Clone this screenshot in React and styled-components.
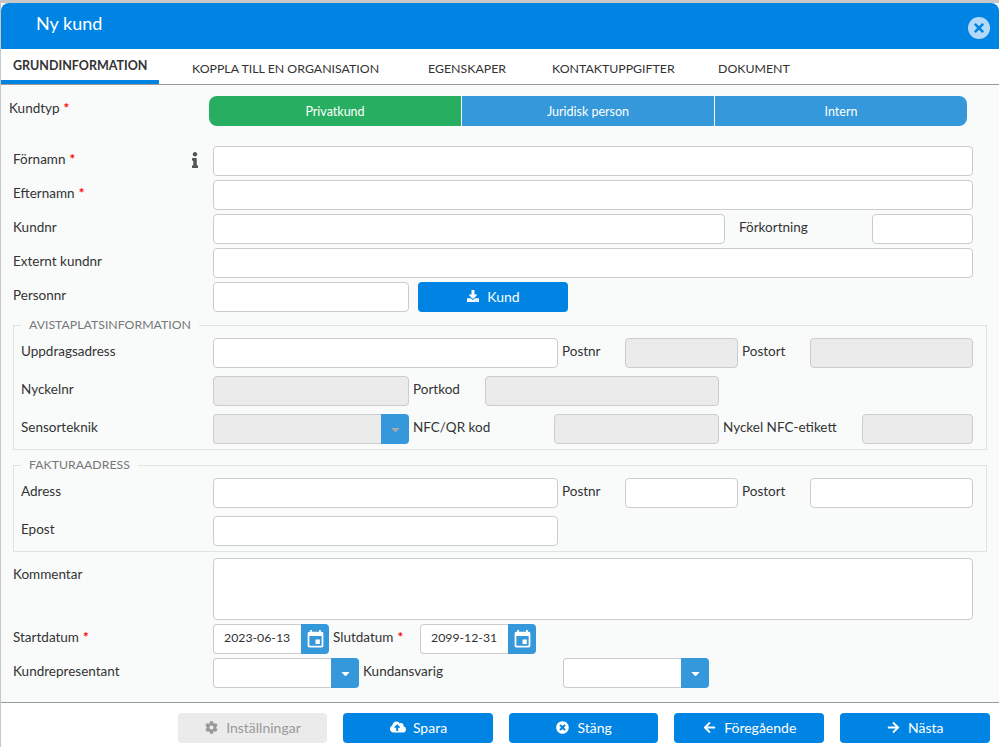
import React from "react";
import styled, { createGlobalStyle } from "styled-components";
import {
  FaArrowLeft,
  FaArrowRight,
  FaCaretDown,
  FaCloudUploadAlt,
  FaCog,
  FaDownload,
  FaInfo,
  FaTimes,
  FaTimesCircle,
} from "react-icons/fa";
import { MdEvent } from "react-icons/md";

const GlobalStyle = createGlobalStyle`
  html, body {
    margin: 0;
    padding: 0;
    background: #c8c8c8;
    font-family: "Lato", "Noto Sans", sans-serif;
    font-size: 13.5px;
    color: #333;
    overflow: hidden;
  }
  * { box-sizing: border-box; }
`;

const Dialog = styled.div`
  display: flex;
  flex-direction: column;
  width: 998px;
  height: 744px;
  margin: 3px 0 0 1px;
  background: #fff;
`;

const Header = styled.div`
  display: flex;
  justify-content: space-between;
  height: 46px;
  padding: 8px 9px 0 35px;
  background: #0084e3;
  border-radius: 8px 8px 0 0;
  color: #fff;
  font-size: 18px;
  line-height: 24px;
`;

const CloseButton = styled.span`
  display: flex;
  align-items: center;
  justify-content: center;
  width: 22px;
  height: 22px;
  margin-top: 6px;
  border-radius: 50%;
  background: #b3dbf8;
  color: #0084e3;
  font-size: 14px;
`;

const Tabs = styled.div`
  display: flex;
  height: 36px;
  border-bottom: 1px solid #999;
`;

const Tab = styled.div`
  width: ${(p) => p.$width}px;
  height: 35px;
  padding: ${(p) => (p.$active ? "8px 0 0 12px" : "11px 0 0 0")};
  border-bottom: ${(p) => (p.$active ? "4px solid #0084e3" : "none")};
  font-size: ${(p) => (p.$active ? 12.5 : 12.35)}px;
  line-height: 17px;
  font-weight: ${(p) => (p.$active ? 700 : 400)};
  white-space: nowrap;
`;

const Main = styled.div`
  flex: 1;
  padding-top: 11px;
  background: #f9fbfb;
  border-bottom: 1px solid #999;
`;

const TypeRow = styled.div`
  display: flex;
  align-items: flex-start;
  margin-bottom: 20px;
`;

const TypeLabel = styled.div`
  width: 208px;
  padding: 3px 0 0 8px;
  line-height: 18px;
`;

const Segments = styled.div`
  display: flex;
  gap: 1px;
  width: 758px;
  height: 30px;
  border-radius: 8px;
  overflow: hidden;
`;

const Segment = styled.div`
  flex: 1;
  background: ${(p) => (p.$active ? "#27ae60" : "#3498db")};
  color: #fff;
  font-size: 12.5px;
  line-height: 31px;
  text-align: center;
`;

const Row = styled.div`
  display: flex;
  align-items: flex-start;
  margin-top: ${(p) => p.$top ?? 0}px;
  margin-bottom: ${(p) => p.$gap ?? 4}px;
`;

const Label = styled.div`
  display: flex;
  justify-content: space-between;
  flex: none;
  width: ${(p) => p.$width}px;
  padding: ${(p) => p.$top ?? 4}px ${(p) => p.$right ?? 0}px 0 ${(p) => p.$left ?? 0}px;
  line-height: 18px;
  white-space: nowrap;
`;

const Required = styled.span`
  margin-left: 4px;
  color: #f00;
  font-weight: 700;
`;

const InfoIcon = styled(FaInfo)`
  margin-top: 2px;
  color: #555;
  font-size: 16px;
`;

const Input = styled.div`
  flex: none;
  width: ${(p) => p.$width}px;
  height: ${(p) => p.$height ?? 30}px;
  padding: 0 0 0 10px;
  background: ${(p) => (p.$disabled ? "#ebebeb" : "#fff")};
  border: 1px solid #ccc;
  border-radius: 4px;
  font-size: 12.3px;
  line-height: 26px;
  white-space: nowrap;
`;

const Combo = styled.div`
  display: flex;
  flex: none;
  width: ${(p) => p.$width}px;
  height: 30px;
`;

const ComboInput = styled(Input)`
  flex: 1;
  width: auto;
  border-right: none;
  border-radius: 4px 0 0 4px;
`;

const ComboButton = styled.span`
  display: flex;
  align-items: center;
  justify-content: center;
  width: 28px;
  background: #3498db;
  border-radius: 0 4px 4px 0;
  color: ${(p) => (p.$disabled ? "#aaa" : "#fff")};
  font-size: ${(p) => p.$size ?? 13}px;
`;

const Section = styled.fieldset`
  margin: ${(p) => p.$top}px 12px 0;
  padding: 4px 7px 5px;
  border: 1px solid #dfe3e3;
`;

const Legend = styled.legend`
  margin-left: 0;
  padding: 0 8px;
  color: #777;
  font-size: 12.3px;
  line-height: 18px;
`;

const SectionRow = styled(Row)`
  margin-bottom: ${(p) => (p.$last ? 0 : 8)}px;
`;

const Button = styled.div`
  display: flex;
  align-items: center;
  justify-content: center;
  gap: ${(p) => p.$gap ?? 8}px;
  flex: none;
  width: ${(p) => p.$width ?? 149.6}px;
  height: 30px;
  margin-left: ${(p) => p.$left ?? 0}px;
  padding: 0 0 2px 1px;
  background: ${(p) => (p.$disabled ? "#ebebeb" : "#0084e3")};
  border-radius: 4px;
  color: ${(p) => (p.$disabled ? "#999" : "#fff")};
  font-size: 14px;
`;

const Footer = styled.div`
  display: flex;
  justify-content: flex-end;
  gap: 16px;
  height: 44px;
  padding: 10px 9.4px 0 0;
`;

const RowBlock = styled.div`
  padding-left: 12px;
`;

const Req = () => <Required>*</Required>;

export default function App() {
  return (
    <>
      <GlobalStyle />
      <Dialog>
        <Header>
          Ny kund
          <CloseButton>
            <FaTimes />
          </CloseButton>
        </Header>
        <Tabs>
          <Tab $active $width={158}>GRUNDINFORMATION</Tab>
          <Tab $width={33} />
          <Tab $width={236}>KOPPLA TILL EN ORGANISATION</Tab>
          <Tab $width={124}>EGENSKAPER</Tab>
          <Tab $width={166}>KONTAKTUPPGIFTER</Tab>
          <Tab $width={100}>DOKUMENT</Tab>
        </Tabs>
        <Main>
          <TypeRow>
            <TypeLabel>Kundtyp<Req /></TypeLabel>
            <Segments>
              <Segment $active>Privatkund</Segment>
              <Segment>Juridisk person</Segment>
              <Segment>Intern</Segment>
            </Segments>
          </TypeRow>

          <RowBlock>
            <Row>
              <Label $width={200} $right={10}>
                <span>Förnamn<Req /></span>
                <InfoIcon />
              </Label>
              <Input $width={760} />
            </Row>
            <Row>
              <Label $width={200}><span>Efternamn<Req /></span></Label>
              <Input $width={760} />
            </Row>
            <Row>
              <Label $width={200}>Kundnr</Label>
              <Input $width={512} />
              <Label $width={147} $left={14}>Förkortning</Label>
              <Input $width={101} />
            </Row>
            <Row>
              <Label $width={200}>Externt kundnr</Label>
              <Input $width={760} />
            </Row>
            <Row $gap={0}>
              <Label $width={200}>Personnr</Label>
              <Input $width={196} />
              <Button $left={9} $width={150}>
                <FaDownload size={12} />
                Kund
              </Button>
            </Row>
          </RowBlock>

          <Section $top={4}>
            <Legend>AVISTAPLATSINFORMATION</Legend>
            <SectionRow>
              <Label $width={192}>Uppdragsadress</Label>
              <Input $width={345} />
              <Label $width={67} $left={4}>Postnr</Label>
              <Input $width={113} $disabled />
              <Label $width={72} $left={4}>Postort</Label>
              <Input $width={163} $disabled />
            </SectionRow>
            <SectionRow>
              <Label $width={192}>Nyckelnr</Label>
              <Input $width={196} $disabled />
              <Label $width={76} $left={4}>Portkod</Label>
              <Input $width={234} $disabled />
            </SectionRow>
            <SectionRow $last>
              <Label $width={192}>Sensorteknik</Label>
              <Combo $width={196}>
                <ComboInput $disabled />
                <ComboButton $disabled><FaCaretDown /></ComboButton>
              </Combo>
              <Label $width={145} $left={4}>NFC/QR kod</Label>
              <Input $width={165} $disabled />
              <Label $width={143} $left={4}>Nyckel NFC-etikett</Label>
              <Input $width={111} $disabled />
            </SectionRow>
          </Section>

          <Section $top={6}>
            <Legend>FAKTURAADRESS</Legend>
            <SectionRow>
              <Label $width={192}>Adress</Label>
              <Input $width={345} />
              <Label $width={67} $left={4}>Postnr</Label>
              <Input $width={113} />
              <Label $width={72} $left={4}>Postort</Label>
              <Input $width={163} />
            </SectionRow>
            <SectionRow $last>
              <Label $width={192}>Epost</Label>
              <Input $width={345} />
            </SectionRow>
          </Section>

          <RowBlock>
            <Row $top={6}>
              <Label $width={200} $top={7}>Kommentar</Label>
              <Input $width={760} $height={62} />
            </Row>
            <Row>
              <Label $width={200}><span>Startdatum<Req /></span></Label>
              <Combo $width={116}>
                <ComboInput>2023-06-13</ComboInput>
                <ComboButton $size={21}><MdEvent /></ComboButton>
              </Combo>
              <Label $width={91} $left={4}><span>Slutdatum<Req /></span></Label>
              <Combo $width={116}>
                <ComboInput>2099-12-31</ComboInput>
                <ComboButton $size={21}><MdEvent /></ComboButton>
              </Combo>
            </Row>
            <Row $gap={0}>
              <Label $width={200}>Kundrepresentant</Label>
              <Combo $width={146}>
                <ComboInput />
                <ComboButton><FaCaretDown /></ComboButton>
              </Combo>
              <Label $width={204} $left={4}>Kundansvarig</Label>
              <Combo $width={146}>
                <ComboInput />
                <ComboButton><FaCaretDown /></ComboButton>
              </Combo>
            </Row>
          </RowBlock>
        </Main>
        <Footer>
          <Button $disabled><FaCog size={13} />Inställningar</Button>
          <Button $gap={7}><FaCloudUploadAlt size={16} />Spara</Button>
          <Button><FaTimesCircle size={13} />Stäng</Button>
          <Button><FaArrowLeft size={13} />Föregående</Button>
          <Button><FaArrowRight size={13} />Nästa</Button>
        </Footer>
      </Dialog>
    </>
  );
}
